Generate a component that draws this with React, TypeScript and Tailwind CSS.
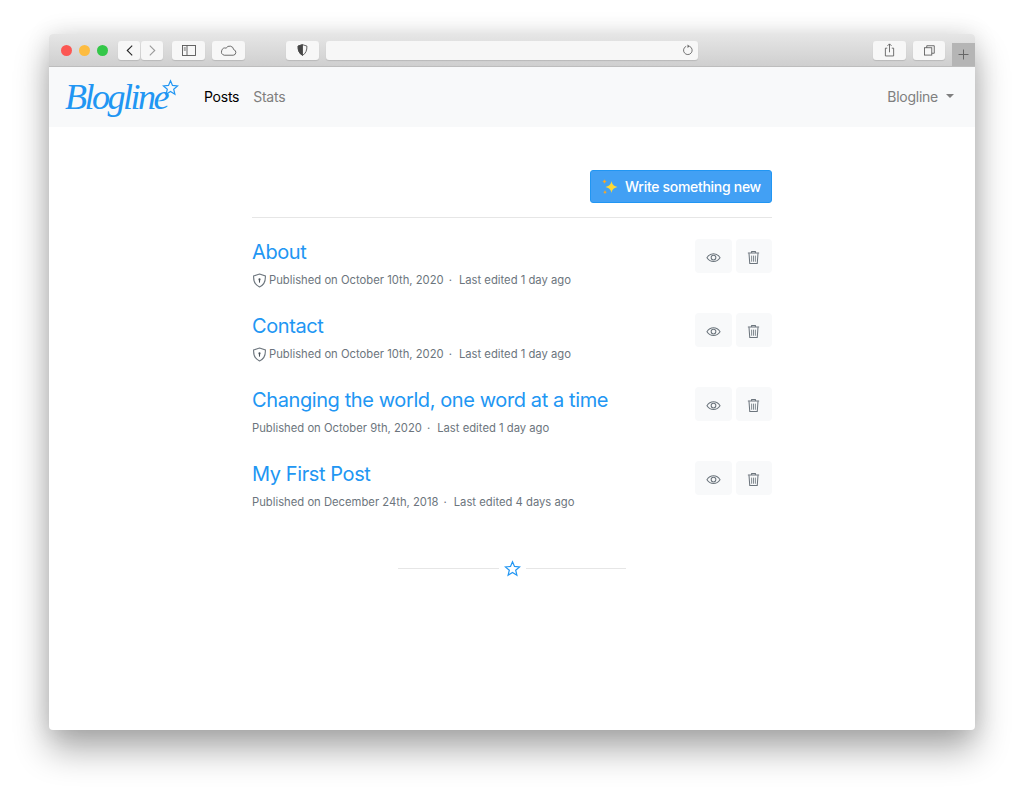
import React from 'react';

const posts = [
  { title: 'About', date: 'October 10th, 2020', edited: '1 day ago', locked: true },
  { title: 'Contact', date: 'October 10th, 2020', edited: '1 day ago', locked: true },
  { title: 'Changing the world, one word at a time', date: 'October 9th, 2020', edited: '1 day ago', locked: false },
  { title: 'My First Post', date: 'December 24th, 2018', edited: '4 days ago', locked: false },
];

function Star({ className }: { className: string }) {
  return (
    <svg viewBox="0 0 24 24" className={className} fill="none" stroke="#2196f3" strokeWidth="1.7" strokeLinejoin="miter">
      <path d="M12 2.5l2.8 6.6 7.2.6-5.5 4.7 1.7 7-6.200-3.700-6.200 3.700 1.700-7L2 9.700l7.200-.6z" />
    </svg>
  );
}

function Sparkles() {
  return (
    <svg viewBox="0 0 18 18" className="w-[18px] h-[18px]" fill="#fdd835">
      <path d="M10.500 3c.7 3.400 1.800 4.800 6 6-4.200 1.200-5.300 2.600-6 6-.7-3.400-1.800-4.800-6-6 4.200-1.200 5.300-2.600 6-6z" />
      <path d="M3.500 1c.3 1.400.7 1.900 2 2.500-1.300.6-1.700 1.100-2 2.500-.3-1.400-.7-1.900-2-2.500 1.300-.6 1.700-1.100 2-2.500z" fill="#f9a825" />
      <path d="M4 12c.3 1.300.7 1.800 1.800 2.200-1.100.4-1.500.9-1.800 2.200-.3-1.300-.7-1.800-1.800-2.200 1.100-.4 1.500-.9 1.800-2.200z" fill="#f9a825" />
    </svg>
  );
}

function ShieldLock() {
  return (
    <svg viewBox="0 0 14 14" className="w-[15px] h-[15px] mr-[2px] shrink-0" fill="none" stroke="#6c757d" strokeWidth="1">
      <path d="M7 1l5.500 1.800c.2 4.600-1.300 8.400-5.500 10.200C2.800 11.200 1.300 7.400 1.500 2.800z" />
      <circle cx="7" cy="6" r="1" fill="#495057" stroke="none" />
      <path d="M7 6v3" stroke="#495057" />
    </svg>
  );
}

function Eye() {
  return (
    <svg viewBox="0 0 16 16" className="w-[15px] h-[15px]" fill="none" stroke="#6c757d" strokeWidth="1.100">
      <path d="M1 8.200C2.800 5.400 5.200 4 8 4s5.200 1.400 7 4.200c-1.800 2.600-4.200 4-7 4s-5.200-1.400-7-4z" />
      <circle cx="8" cy="8.100" r="2.500" />
    </svg>
  );
}

function Trash() {
  return (
    <svg viewBox="0 0 16 16" className="w-[15px] h-[15px]" fill="none" stroke="#6c757d" strokeWidth="1.100">
      <path d="M2 3.300h12M6 3V1.500h4V3" />
      <path d="M3.200 3.500l.8 11h8l.8-11" />
      <path d="M6 6v6.500M8 6v6.500M10 6v6.500" strokeWidth="0.900" />
    </svg>
  );
}

function ChromeButton({ className, children }: { className: string; children?: React.ReactNode }) {
  return (
    <div className={`h-[19px] bg-[#f7f7f7] rounded-[3px] flex items-center justify-center shadow-[0_1px_1px_rgba(0,0,0,0.12)] ${className}`}>
      {children}
    </div>
  );
}

function TitleBar() {
  return (
    <div className="h-[33px] flex items-center pl-[11.500px] bg-gradient-to-b from-[#e6e6e6] to-[#cfcfcf] border-b border-[#bdbdbd] rounded-t-[4px]">
      <div className="w-[11px] h-[11px] rounded-full bg-[#fc5753]" />
      <div className="w-[11px] h-[11px] rounded-full bg-[#fdbc40] ml-[7px]" />
      <div className="w-[11px] h-[11px] rounded-full bg-[#33c748] ml-[7px]" />
      <ChromeButton className="w-[22px] ml-[10.500px]">
        <svg viewBox="0 0 10 14" className="w-[9px] h-[13px]" fill="none" stroke="#222" strokeWidth="1.200"><path d="M8 1.500L2.500 7 8 12.500" /></svg>
      </ChromeButton>
      <ChromeButton className="w-[22px] ml-[1px]">
        <svg viewBox="0 0 10 14" className="w-[9px] h-[13px]" fill="none" stroke="#999" strokeWidth="1.200"><path d="M2 1.500L7.500 7 2 12.500" /></svg>
      </ChromeButton>
      <ChromeButton className="w-[33px] ml-[9px]">
        <svg viewBox="0 0 14 11" className="w-[14px] h-[11px]" fill="none" stroke="#555" strokeWidth="0.900"><rect x="0.500" y="0.500" width="13" height="10" /><path d="M5 0.500v10M1.800 3h2M1.800 5h2" /></svg>
      </ChromeButton>
      <ChromeButton className="w-[33px] ml-[7px]">
        <svg viewBox="0 0 18 11" className="w-[17px] h-[11px]" fill="none" stroke="#555" strokeWidth="0.900"><path d="M4.500 10.500h9.500a3 3 0 0 0 .5-5.900A4.300 4.300 0 0 0 6.500 3 3.800 3.800 0 0 0 4.500 10.500z" /></svg>
      </ChromeButton>
      <ChromeButton className="w-[33px] ml-[41px]">
        <svg viewBox="0 0 12 13" className="w-[11px] h-[12px]" stroke="#444" strokeWidth="0.900"><path d="M6 .7l4.800 1.500c.2 4.500-1.200 8.300-4.800 10.100C2.400 10.500 1 6.700 1.200 2.200z" fill="none" /><path d="M6 .7L1.200 2.200C1 6.700 2.400 10.500 6 12.300z" fill="#444" /></svg>
      </ChromeButton>
      <ChromeButton className="w-[372px] ml-[7px] justify-end pr-[4px]">
        <svg viewBox="0 0 12 12" className="w-[12px] h-[12px]" fill="none" stroke="#666" strokeWidth="0.900"><path d="M7.500 2.300a4.300 4.300 0 1 1-3.300 0" /><path d="M5.500 .4l2.300 1.900-2.300 1.700z" fill="#666" stroke="none" /></svg>
      </ChromeButton>
      <ChromeButton className="w-[33px] ml-[175px]">
        <svg viewBox="0 0 12 15" className="w-[11px] h-[14px]" fill="none" stroke="#555" strokeWidth="0.900"><path d="M3.500 5.500H1.500v8.500h9V5.500H8.500M6 10V1M3.800 3L6 .8 8.200 3" /></svg>
      </ChromeButton>
      <ChromeButton className="w-[32px] ml-[7px]">
        <svg viewBox="0 0 12 12" className="w-[11px] h-[11px]" fill="none" stroke="#555" strokeWidth="0.900"><rect x="0.500" y="3" width="8" height="8" /><path d="M3 3V.8h8.200V9H8.500" /></svg>
      </ChromeButton>
      <div className="ml-auto self-end w-[23px] h-[23px] bg-[#b5b5b5] flex items-center justify-center">
        <svg viewBox="0 0 11 11" className="w-[11px] h-[11px]" stroke="#666" strokeWidth="1"><path d="M5.500 .5v10M.5 5.500h10" /></svg>
      </div>
    </div>
  );
}

function NavBar() {
  return (
    <nav className="h-[60px] bg-[#f8f9fa] flex items-center pl-[16px] pr-[21px] tracking-[-0.25px]">
      <div className="relative w-[139px] h-[60px] flex items-center">
        <span className="text-[#2196f3] text-[36px] italic tracking-[-2.500px] font-['Liberation_Serif',serif] leading-none">Blogline</span>
        <Star className="absolute left-[97px] top-[12px] w-[17px] h-[17px]" />
      </div>
      <span className="text-[14px] text-black pb-[2px]">Posts</span>
      <span className="text-[14px] text-[#7f7f7f] ml-[14px] pb-[2px]">Stats</span>
      <span className="text-[14px] text-[#7f7f7f] ml-auto pb-[2px]">Blogline</span>
      <div className="ml-[8px] mb-[2px] w-0 h-0 border-x-[4px] border-x-transparent border-t-[4px] border-t-[#7f7f7f]" />
    </nav>
  );
}

function PostRow({ post }: { post: (typeof posts)[number] }) {
  return (
    <div className="h-[74px] flex justify-between">
      <div>
        <a className="block text-[#2196f3] text-[20px] tracking-[-0.4px] leading-[26px]">{post.title}</a>
        <div className="flex items-center text-[11.250px] text-[#6c757d] mt-[7px] h-[16px]">
          {post.locked && <ShieldLock />}
          <span>Published on {post.date}</span>
          <span className="mx-[5px]">·</span>
          <span className="ml-[2px]">Last edited {post.edited}</span>
        </div>
      </div>
      <div className="flex gap-[4px]">
        <div className="w-[36.500px] h-[34px] pt-[2px] bg-[#f8f9fa] rounded-[4px] flex items-center justify-center"><Eye /></div>
        <div className="w-[36.500px] h-[34px] pt-[2px] bg-[#f8f9fa] rounded-[4px] flex items-center justify-center"><Trash /></div>
      </div>
    </div>
  );
}

export default function App() {
  return (
    <div className="w-[1024px] h-[795px] bg-white pl-[49px] pt-[34px] font-['Inter',sans-serif] overflow-hidden">
      <div className="w-[926px] h-[696px] bg-white rounded-[4px] shadow-[0_20px_35px_rgba(0,0,0,0.32),0_0_25px_rgba(0,0,0,0.12)] flex flex-col">
        <TitleBar />
        <NavBar />
        <main className="w-[520px] mx-auto pt-[43px]">
          <div className="flex justify-end pb-[14px] border-b border-[#e6e6e6]">
            <button className="w-[182px] h-[33px] bg-[#42a0f4] border border-[#2196f3] rounded-[3px] text-white text-[14px] tracking-[-0.3px] font-medium flex items-center justify-center gap-[6px]">
              <Sparkles />
              Write something new
            </button>
          </div>
          <div className="pt-[21px]">
            {posts.map((post) => (
              <PostRow key={post.title} post={post} />
            ))}
          </div>
          <div className="mt-[25px] w-[228px] mx-auto flex items-center gap-[5px]">
            <div className="flex-1 h-px bg-[#e6e6e6]" />
            <Star className="w-[17px] h-[17px]" />
            <div className="flex-1 h-px bg-[#e6e6e6]" />
          </div>
        </main>
      </div>
    </div>
  );
}
